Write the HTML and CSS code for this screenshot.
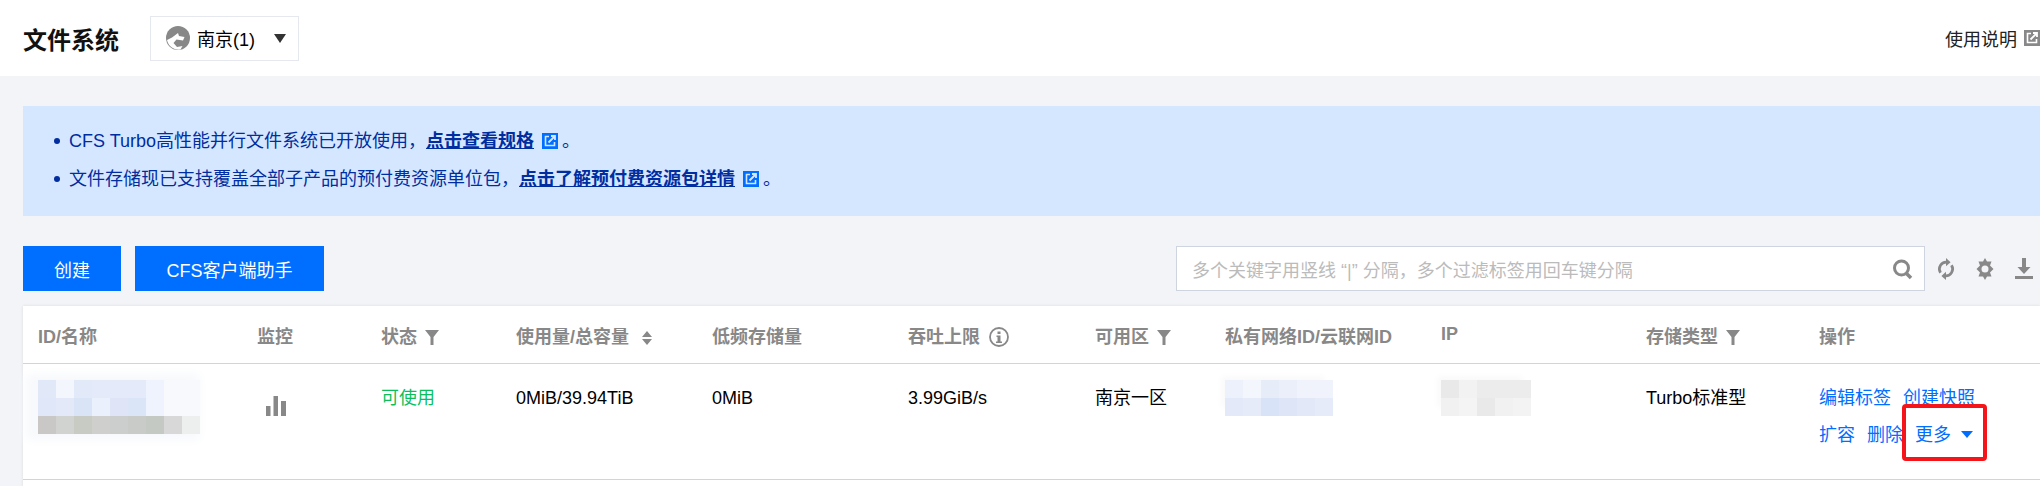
FILE: index.html
```html
<!DOCTYPE html>
<html lang="zh-CN">
<head>
    <meta charset="UTF-8">
    <meta name="viewport" content="width=device-width, initial-scale=1.0">
    <title>文件系统</title>
    <link rel="stylesheet" href="styles.css">
</head>
<body>
    <header class="top-bar">
        <h1 class="page-title">文件系统</h1>
        <div class="region-select">
            <svg class="globe" viewBox="0 0 24 24"><circle cx="12" cy="12" r="12" fill="#888"/><path d="M1 14 6 11.500 12 7 13 10 18.500 11 17 14.500 10.500 13.500 7.500 17 11 21 16.500 20 14.500 23.500A12 12 0 0 1 1 14Z" fill="#fff"/></svg>
            <span>南京(1)</span>
            <i class="caret-dark"></i>
        </div>
        <a class="doc-link">使用说明
            <svg class="ext-icon" viewBox="0 0 16 16"><path d="M0 0h16v16H0Z" fill="#888"/><path d="M7 3.500H3.500v9h9V9" fill="none" stroke="#fff" stroke-width="1.600"/><path d="M6.500 9.500 12.500 3.500M9 3h4v4" fill="none" stroke="#fff" stroke-width="1.800"/></svg>
        </a>
    </header>

    <main class="content">
        <section class="notice">
            <ul>
                <li>CFS Turbo高性能并行文件系统已开放使用，<a>点击查看规格</a>
                    <svg class="ext-icon" viewBox="0 0 16 16"><path d="M0 0h16v16H0Z" fill="#006eff"/><path d="M7 3.500H3.500v9h9V9" fill="none" stroke="#d5e7ff" stroke-width="1.600"/><path d="M6.500 9.500 12.500 3.500M9 3h4v4" fill="none" stroke="#d5e7ff" stroke-width="1.800"/></svg>
                    <span class="stop">。</span></li>
                <li>文件存储现已支持覆盖全部子产品的预付费资源单位包，<a>点击了解预付费资源包详情</a>
                    <svg class="ext-icon" viewBox="0 0 16 16"><path d="M0 0h16v16H0Z" fill="#006eff"/><path d="M7 3.500H3.500v9h9V9" fill="none" stroke="#d5e7ff" stroke-width="1.600"/><path d="M6.500 9.500 12.500 3.500M9 3h4v4" fill="none" stroke="#d5e7ff" stroke-width="1.800"/></svg>
                    <span class="stop">。</span></li>
            </ul>
        </section>

        <div class="toolbar">
            <button class="btn btn-create">创建</button>
            <button class="btn btn-helper">CFS客户端助手</button>
            <div class="search">
                <span class="placeholder">多个关键字用竖线 “|” 分隔，多个过滤标签用回车键分隔</span>
                <svg class="tool-icon" viewBox="0 0 22 20"><circle cx="9.500" cy="9" r="7" fill="none" stroke="#888" stroke-width="3"/><path d="M14 14l5 5" stroke="#888" stroke-width="3.500"/></svg>
            </div>
            <div class="tools">
                <svg class="tool-icon" viewBox="0 0 20 24"><path d="M4 16A7.500 7.500 0 0 1 11 4.500" fill="none" stroke="#888" stroke-width="3"/><path d="M10 0l5 4.500-5 4.500Z" fill="#888"/><path d="M16 8A7.500 7.500 0 0 1 9 19.500" fill="none" stroke="#888" stroke-width="3"/><path d="M10 15l-5 4.500 5 4.500Z" fill="#888"/></svg>
                <svg class="tool-icon" viewBox="0 0 20 22"><path d="M10 0l2 3.500h4.500L15 7.500l3.500 3.500-3.500 3.500 1.500 4H12L10 22l-2-3.500H3.500l1.500-4L1.500 11 5 7.500l-1.500-4H8Z" fill="#888"/><circle cx="10" cy="11" r="3.500" fill="#f2f4f8"/></svg>
                <svg class="tool-icon" viewBox="0 0 20 22"><path d="M8 0h4v9h4.500L10 16 3.500 9H8ZM1 18h18v3H1Z" fill="#888"/></svg>
            </div>
        </div>

        <div class="card">
            <table class="list">
                <colgroup>
                    <col class="c-id"><col class="c-mon"><col class="c-status"><col class="c-usage"><col class="c-low">
                    <col class="c-thru"><col class="c-zone"><col class="c-vpc"><col class="c-ip"><col class="c-type"><col>
                </colgroup>
                <thead>
                    <tr>
                        <th>ID/名称</th>
                        <th>监控</th>
                        <th>状态<svg class="filter" viewBox="0 0 14 15"><path d="M0 0h14L8.500 7v8h-3V7Z" fill="#888"/></svg></th>
                        <th>使用量/总容量<svg class="sort" viewBox="0 0 12 14"><path d="M6 0l5 6H1ZM6 14l-5-6h10Z" fill="#888"/></svg></th>
                        <th>低频存储量</th>
                        <th>吞吐上限<svg class="info" viewBox="0 0 20 20"><circle cx="10" cy="10" r="9" fill="none" stroke="#888" stroke-width="1.800"/><path d="M8.500 4.500h3v2.500h-3ZM7.500 8.500h4v6h1.500v1.500H7V14.500h1.500V10h-1Z" fill="#888"/></svg></th>
                        <th>可用区<svg class="filter" viewBox="0 0 14 15"><path d="M0 0h14L8.500 7v8h-3V7Z" fill="#888"/></svg></th>
                        <th>私有网络ID/云联网ID</th>
                        <th>IP</th>
                        <th>存储类型<svg class="filter" viewBox="0 0 14 15"><path d="M0 0h14L8.500 7v8h-3V7Z" fill="#888"/></svg></th>
                        <th>操作</th>
                    </tr>
                </thead>
                <tbody>
                    <tr>
                        <td>
                            <div class="blur blur-id">
                                <div class="mosaic m-id-1"></div>
                                <div class="mosaic m-id-2"></div>
                                <div class="mosaic m-id-3"></div>
                            </div>
                        </td>
                        <td>
                            <svg class="bars" viewBox="0 0 20 20"><path d="M0 10h4.500v10H0ZM7.500 0H12v20H7.500ZM15 5h5v15h-5Z" fill="#888"/></svg>
                        </td>
                        <td class="ok">可使用</td>
                        <td>0MiB/39.94TiB</td>
                        <td>0MiB</td>
                        <td>3.99GiB/s</td>
                        <td>南京一区</td>
                        <td>
                            <div class="blur blur-line">
                                <div class="mosaic m-vpc-1"></div>
                                <div class="mosaic m-vpc-2"></div>
                            </div>
                        </td>
                        <td>
                            <div class="blur blur-line">
                                <div class="mosaic m-ip-1"></div>
                                <div class="mosaic m-ip-2"></div>
                            </div>
                        </td>
                        <td>Turbo标准型</td>
                        <td>
                            <div class="actions"><a>编辑标签</a><a>创建快照</a></div>
                            <div class="actions"><a>扩容</a><a>删除</a><a class="more">更多<i class="caret-blue"></i></a></div>
                        </td>
                    </tr>
                </tbody>
            </table>
            <div class="highlight"></div>
        </div>
    </main>
</body>
</html>
```

FILE: styles.css
```css
body
{
    margin: 0;
    min-height: 100vh;
    overflow: hidden;
    background: #f2f4f8;
    color: #000;
    font-family: "Liberation Sans", "Noto Sans CJK SC", sans-serif;
    font-size: 18px;
}
.top-bar
{
    display: flex;
    align-items: center;
    height: 76px;
    padding-left: 23px;
    background: #fff;
}
.page-title
{
    margin: 0 31px 0 0;
    font-size: 24px;
    font-weight: bold;
    color: #111;
}
.region-select
{
    display: flex;
    align-items: center;
    box-sizing: border-box;
    width: 149px;
    height: 45px;
    padding-left: 15px;
    border: 1px solid #e5e8ef;
}
.globe { width: 24px; height: 24px; margin-right: 7px; }
.caret-dark
{
    margin-left: 19px;
    border-top: 9px solid #333;
    border-left: 6px solid transparent;
    border-right: 6px solid transparent;
}
.doc-link
{
    display: flex;
    align-items: center;
    gap: 7px;
    margin-left: auto;
    color: #222;
}
.ext-icon { width: 16px; height: 16px; vertical-align: -2px; }
.content { padding: 30px 0 0 23px; }
.notice
{
    box-sizing: border-box;
    height: 110px;
    margin-bottom: 30px;
    padding: 16px 0 0 31px;
    background: #d5e7ff;
    color: #002da0;
}
.notice ul { margin: 0; padding: 0; list-style: none; }
.notice li { position: relative; padding-left: 15px; line-height: 38px; }
.notice li::before
{
    content: "";
    position: absolute;
    left: 0;
    top: 16px;
    width: 6px;
    height: 6px;
    border-radius: 50%;
    background: #002da0;
}
.notice a { font-weight: bold; text-decoration: underline; }
.notice .ext-icon { margin-left: 3px; }
.stop { margin-left: -1px; }
.toolbar { display: flex; align-items: center; height: 45px; margin-bottom: 15px; }
.btn
{
    height: 45px;
    border: none;
    background: #006eff;
    color: #fff;
    font-family: inherit;
    font-size: 18px;
}
.btn-create { width: 98px; margin-right: 14px; }
.btn-helper { width: 189px; }
.search
{
    display: flex;
    align-items: center;
    justify-content: space-between;
    box-sizing: border-box;
    width: 749px;
    height: 45px;
    margin-left: auto;
    padding: 0 10px 0 15px;
    border: 1px solid #cfd5de;
    background: #fff;
}
.placeholder { color: #bbb; }
.tool-icon { width: 22px; height: 22px; }
.tools { display: flex; gap: 17px; padding: 0 5px 0 10px; }
.card
{
    position: relative;
    padding-bottom: 7px;
    background: #fff;
    box-shadow: 0 0 3px rgba(0,0,0,0.1);
}
.list { width: 100%; table-layout: fixed; border-collapse: collapse; }
.c-id { width: 219px; }
.c-mon { width: 124px; }
.c-status { width: 135px; }
.c-usage { width: 196px; }
.c-low { width: 196px; }
.c-thru { width: 187px; }
.c-zone { width: 130px; }
.c-vpc { width: 216px; }
.c-ip { width: 205px; }
.c-type { width: 173px; }
.list th
{
    height: 57px;
    padding: 0 0 0 15px;
    border-bottom: 1px solid #cfd5de;
    text-align: left;
    white-space: nowrap;
    font-weight: bold;
    color: #888;
}
.list td
{
    height: 99px;
    padding: 16px 0 0 15px;
    border-bottom: 1px solid #cfd5de;
    vertical-align: top;
    line-height: 37px;
    white-space: nowrap;
}
.filter { width: 14px; height: 15px; margin-left: 8px; vertical-align: -2px; }
.sort { width: 12px; height: 14px; margin-left: 12px; vertical-align: -2px; }
.info { width: 20px; height: 20px; margin-left: 9px; vertical-align: -4px; }
.ok { color: #0abf5b; }
.bars { display: block; width: 20px; height: 20px; margin: 16px 0 0 9px; }
.blur { width: fit-content; }
.blur-id { box-shadow: -6px 0 10px 6px #f7f9fc; background: #f7f9fc; }
.blur-line { box-shadow: -6px -6px 6px -2px #fafafa; }
.mosaic { height: 18px; }
.m-id-1
{
    width: 126px;
    background: linear-gradient(90deg, #e1e9f9 0 18px, #f3f6fd 18px 36px, #e2e9f9 36px 54px, #e4eafa 54px 108px, #eff3fd 108px);
}
.m-id-2
{
    width: 126px;
    background: linear-gradient(90deg, #dfe7f8 0 18px, #e3e9f9 18px 36px, #d9e4f7 36px 54px, #ebf1fc 54px 72px, #dfe5f7 72px 90px, #dae5f7 90px 108px, #eff3fd 108px);
}
.m-id-3
{
    width: 162px;
    background: linear-gradient(90deg, #c9c8c6 0 18px, #d0d3d0 18px 36px, #c8cbc4 36px 54px, #cfcfce 54px 72px, #cccdcd 72px 90px, #c9cbc9 90px 108px, #c4c9c3 108px 126px, #d8d8d8 126px 144px, #edefee 144px);
}
.m-vpc-1
{
    width: 108px;
    background: linear-gradient(90deg, #edf1fb 0 18px, #f3f6fd 18px 36px, #e7ecf9 36px 54px, #ebeffa 54px 72px, #f0f3fc 72px);
}
.m-vpc-2
{
    width: 108px;
    background: linear-gradient(90deg, #e3e9f8 0 18px, #e6ebf9 18px 36px, #d8e3f7 36px 54px, #dde5f7 54px 72px, #e2e8f8 72px 90px, #e6ebf9 90px);
}
.m-ip-1
{
    width: 90px;
    background: linear-gradient(90deg, #e9e9e9 0 18px, #f2f2f2 18px 36px, #ececec 36px);
}
.m-ip-2
{
    width: 90px;
    background: linear-gradient(90deg, #f1f1f2 0 18px, #f4f4f4 18px 36px, #e9e9e9 36px 54px, #f1f1f1 54px 72px, #f3f3f3 72px);
}
.actions { display: flex; gap: 12px; color: #006eff; }
.caret-blue
{
    display: inline-block;
    margin-left: 10px;
    vertical-align: 3px;
    border-top: 7px solid #006eff;
    border-left: 6px solid transparent;
    border-right: 6px solid transparent;
}
.highlight
{
    position: absolute;
    left: 1879px;
    top: 98px;
    width: 77px;
    height: 49px;
    border: 4px solid #f5141a;
    border-radius: 4px;
}
```
